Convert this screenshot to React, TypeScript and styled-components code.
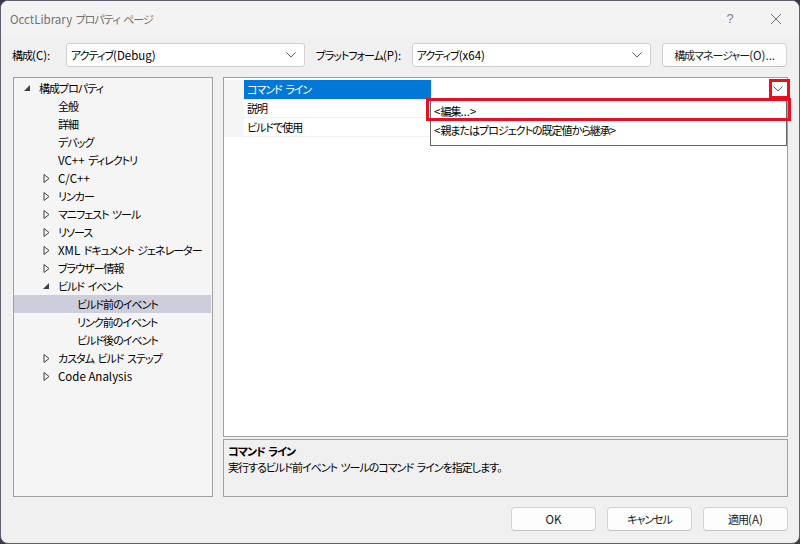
import React from 'react';
import styled, { createGlobalStyle } from 'styled-components';

const GlobalStyle = createGlobalStyle`
	html, body {
		margin: 0;
		padding: 0;
		background: #3a3a46;
	}
	body {
		font-family: "Noto Sans CJK JP", "Noto Sans", sans-serif;
		font-size: 11px;
		letter-spacing: -1px;
		word-spacing: 2px;
		font-feature-settings: "palt";
		color: #000;
	}
`;

// Latin runs keep their normal width; the kana around them are set tight
const Latin = styled.span`
	font-size: 11.5px;
	letter-spacing: 0;
	word-spacing: 0;
`;

const Txt = ({ children }: { children: string }) => (
	<>
		{children.split(/([A-Za-z0-9()+./:<>\-]+(?: [A-Za-z0-9()+./:<>\-]+)*)/).map((part, i) =>
			i % 2 === 1 ? <Latin key={i}>{part}</Latin> : part
		)}
	</>
);

const Window = styled.div`
	width: 800px;
	height: 544px;
	box-sizing: border-box;
	border: 1px solid #5e5e6c;
	border-radius: 8px;
	background: #f0f0f0;
	display: flex;
	flex-direction: column;
	overflow: hidden;
`;

const TitleBar = styled.div`
	height: 35px;
	display: flex;
	align-items: center;
	padding-left: 9px;
	background: #f3f3f3;
`;

const Title = styled.div`
	flex: 1;
	color: #707070;
`;

const CaptionButton = styled.div`
	width: 46px;
	height: 32px;
	display: flex;
	align-items: center;
	justify-content: center;
	color: #808080;
	font-size: 13px;
	letter-spacing: 0;
	font-family: "Liberation Sans", sans-serif;
`;

const Toolbar = styled.div`
	display: flex;
	align-items: center;
	height: 24px;
	margin-top: 7px;
	padding: 0 12px 0 11px;
`;

const FieldLabel = styled.label<{ $width: number }>`
	width: ${p => p.$width}px;
	flex-shrink: 0;
	white-space: nowrap;
`;

const Combo = styled.div<{ $width: number }>`
	width: ${p => p.$width}px;
	height: 24px;
	box-sizing: border-box;
	border: 1px solid #cfcfcf;
	border-radius: 3px;
	background: #fff;
	display: flex;
	align-items: center;
	padding: 0 8px 0 4px;
	margin-right: 11px;
`;

const ComboText = styled.span`
	flex: 1;
`;

const Button = styled.button<{ $width?: number }>`
	width: ${p => p.$width ?? 85}px;
	height: 24px;
	box-sizing: border-box;
	border: 1px solid #d2d2d2;
	border-bottom-color: #c2c2c2;
	border-radius: 4px;
	background: #fdfdfd;
	font: inherit;
	letter-spacing: inherit;
	word-spacing: inherit;
	color: #1a1a1a;
	padding: 0;
`;

const Main = styled.div`
	display: flex;
	gap: 10px;
	padding: 0 11px 0 12px;
	margin-top: 10px;
	height: 420px;
`;

const TreePanel = styled.div`
	width: 200px;
	box-sizing: border-box;
	border: 1px solid #a0a0a0;
	background: #f5f5f5;
	padding-top: 1px;
	overflow: hidden;
`;

const TreeRow = styled.div<{ $selected?: boolean }>`
	height: 18px;
	display: flex;
	align-items: center;
	margin-right: 1px;
	background: ${p => (p.$selected ? '#cccedb' : 'transparent')};
	white-space: pre;
`;

const Indent = styled.span<{ $level: number }>`
	flex-shrink: 0;
	width: ${p => 8 + p.$level * 19}px;
`;

const Expander = styled.span`
	flex-shrink: 0;
	width: 17px;
	display: flex;
	align-items: center;
	padding-left: 2px;
	box-sizing: border-box;
`;

const RightColumn = styled.div`
	flex: 1;
	display: flex;
	flex-direction: column;
	gap: 2px;
`;

const Grid = styled.div`
	position: relative;
	height: 360px;
	box-sizing: border-box;
	border: 1px solid #a0a0a0;
	background: #fff;
	padding-top: 2px;
`;

const GridRow = styled.div`
	display: flex;
	height: 19px;
`;

const Gutter = styled.div`
	width: 20px;
	background: #f5f5f5;
`;

const NameCell = styled.div<{ $selected?: boolean }>`
	width: 187px;
	box-sizing: border-box;
	padding-left: 3px;
	display: flex;
	align-items: center;
	white-space: pre;
	background: ${p => (p.$selected ? '#0078d7' : '#fff')};
	color: ${p => (p.$selected ? '#fff' : '#000')};
	border-bottom: 1px solid ${p => (p.$selected ? '#0078d7' : '#f0f0f0')};
`;

const ValueCell = styled.div`
	flex: 1;
	display: flex;
	align-items: center;
	justify-content: flex-end;
	padding-right: 4px;
	border-left: 1px solid #f0f0f0;
	border-bottom: 1px solid #f0f0f0;
`;

const DropList = styled.div`
	position: absolute;
	left: 206px;
	right: 0;
	top: 21px;
	height: 47px;
	box-sizing: border-box;
	border: 1px solid #646464;
	background: #fff;
	padding-top: 1px;
	z-index: 2;
`;

const DropItem = styled.div`
	height: 19px;
	display: flex;
	align-items: center;
	padding-left: 3px;
	white-space: pre;
`;

const Highlight = styled.div<{ $left: number; $top: number; $width: number; $height: number }>`
	position: absolute;
	left: ${p => p.$left}px;
	top: ${p => p.$top}px;
	width: ${p => p.$width}px;
	height: ${p => p.$height}px;
	box-sizing: border-box;
	border: 3px solid #e8101e;
	z-index: 3;
`;

const Description = styled.div`
	height: 58px;
	box-sizing: border-box;
	border: 1px solid #a0a0a0;
	background: #f0f0f0;
	padding: 3px 4px;
	line-height: 16px;
`;

const DescTitle = styled.div`
	font-weight: bold;
`;

const Footer = styled.div`
	display: flex;
	justify-content: flex-end;
	gap: 11px;
	padding: 10px 11px 0 0;
`;

const Chevron = () => (
	<svg width="10" height="6" viewBox="0 0 10 6">
		<path d="M0.5 0.5 L5 5 L9.5 0.5" fill="none" stroke="#606060" strokeWidth="1" />
	</svg>
);

const OpenArrow = () => (
	<svg width="7" height="7" viewBox="0 0 7 7">
		<polygon points="6,0 6,6 0,6" fill="#404040" />
	</svg>
);

const ClosedArrow = () => (
	<svg width="7" height="9" viewBox="0 0 7 9">
		<polygon points="1,0.5 6,4.5 1,8.5" fill="none" stroke="#404040" strokeWidth="1" />
	</svg>
);

type TreeItem = {
	label: string;
	level: number;
	state?: 'open' | 'closed';
	selected?: boolean;
};

const tree: TreeItem[] = [
	{ label: '構成プロパティ', level: 0, state: 'open' },
	{ label: '全般', level: 1 },
	{ label: '詳細', level: 1 },
	{ label: 'デバッグ', level: 1 },
	{ label: 'VC++ ディレクトリ', level: 1 },
	{ label: 'C/C++', level: 1, state: 'closed' },
	{ label: 'リンカー', level: 1, state: 'closed' },
	{ label: 'マニフェスト ツール', level: 1, state: 'closed' },
	{ label: 'リソース', level: 1, state: 'closed' },
	{ label: 'XML ドキュメント ジェネレーター', level: 1, state: 'closed' },
	{ label: 'ブラウザー情報', level: 1, state: 'closed' },
	{ label: 'ビルド イベント', level: 1, state: 'open' },
	{ label: 'ビルド前のイベント', level: 2, selected: true },
	{ label: 'リンク前のイベント', level: 2 },
	{ label: 'ビルド後のイベント', level: 2 },
	{ label: 'カスタム ビルド ステップ', level: 1, state: 'closed' },
	{ label: 'Code Analysis', level: 1, state: 'closed' },
];

const properties = ['コマンド ライン', '説明', 'ビルドで使用'];

export default function App() {
	return (
		<>
			<GlobalStyle />
			<Window>
				<TitleBar>
					<Title>
						<Txt>OcctLibrary プロパティ ページ</Txt>
					</Title>
					<CaptionButton>?</CaptionButton>
					<CaptionButton>
						<svg width="12" height="12" viewBox="0 0 12 12">
							<path d="M1 1 L11 11 M11 1 L1 11" stroke="#707070" strokeWidth="1" />
						</svg>
					</CaptionButton>
				</TitleBar>

				<Toolbar>
					<FieldLabel $width={54}>
						<Txt>構成(C):</Txt>
					</FieldLabel>
					<Combo $width={239}>
						<ComboText>
							<Txt>アクティブ(Debug)</Txt>
						</ComboText>
						<Chevron />
					</Combo>
					<FieldLabel $width={96}>
						<Txt>プラットフォーム(P):</Txt>
					</FieldLabel>
					<Combo $width={240}>
						<ComboText>
							<Txt>アクティブ(x64)</Txt>
						</ComboText>
						<Chevron />
					</Combo>
					<Button $width={125}>
						<Txt>構成マネージャー(O)...</Txt>
					</Button>
				</Toolbar>

				<Main>
					<TreePanel>
						{tree.map((item, i) => (
							<TreeRow key={i} $selected={item.selected}>
								<Indent $level={item.level} />
								<Expander>
									{item.state === 'open' && <OpenArrow />}
									{item.state === 'closed' && <ClosedArrow />}
								</Expander>
								<Txt>{item.label}</Txt>
							</TreeRow>
						))}
					</TreePanel>

					<RightColumn>
						<Grid>
							{properties.map((name, i) => (
								<GridRow key={name}>
									<Gutter />
									<NameCell $selected={i === 0}>{name}</NameCell>
									<ValueCell>{i === 0 && <Chevron />}</ValueCell>
								</GridRow>
							))}
							<DropList>
								<DropItem>
									<Txt>{'<編集...>'}</Txt>
								</DropItem>
								<DropItem>
									<Txt>{'<親またはプロジェクトの既定値から継承>'}</Txt>
								</DropItem>
							</DropList>
							<Highlight $left={545} $top={1} $width={21} $height={20} />
							<Highlight $left={202} $top={20} $width={365} $height={23} />
						</Grid>
						<Description>
							<DescTitle>コマンド ライン</DescTitle>
							<div>実行するビルド前イベント ツールのコマンド ラインを指定します。</div>
						</Description>
					</RightColumn>
				</Main>

				<Footer>
					<Button>
						<Txt>OK</Txt>
					</Button>
					<Button>キャンセル</Button>
					<Button>
						<Txt>適用(A)</Txt>
					</Button>
				</Footer>
			</Window>
		</>
	);
}
